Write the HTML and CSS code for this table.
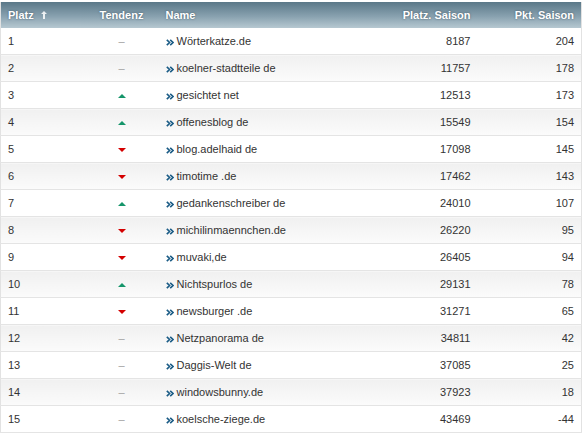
FILE: index.html
```html
<!DOCTYPE html>
<html lang="de">
<head>
<meta charset="utf-8">
<link rel="stylesheet" href="styles.css">
</head>
<body>
<svg class="defs" width="0" height="0" aria-hidden="true">
  <symbol id="chev" viewBox="0 0 8 7">
    <path d="M0.8 0.8 L3.6 3.5 L0.8 6.2 M4.2 0.8 L7 3.5 L4.2 6.2" fill="none" stroke="#1b5c86" stroke-width="1.6"/>
  </symbol>
</svg>
<table class="ranking">
  <colgroup>
    <col class="c-platz"><col class="c-tend"><col class="c-name"><col class="c-ps"><col class="c-pkt">
  </colgroup>
  <thead>
    <tr>
      <th class="left">Platz <span class="sort"><svg width="6" height="8" viewBox="0 0 6 8"><path d="M3 0 L6 3 L4 3 L4 8 L2 8 L2 3 L0 3 Z" fill="#fff" opacity="0.85"/></svg></span></th>
      <th class="center">Tendenz</th>
      <th class="left name">Name</th>
      <th class="right">Platz. Saison</th>
      <th class="right">Pkt. Saison</th>
    </tr>
  </thead>
  <tbody>
    <tr><td>1</td><td class="center"><span class="dash">–</span></td><td class="name"><svg class="go"><use href="#chev"/></svg>Wörterkatze.de</td><td class="right">8187</td><td class="right">204</td></tr>
    <tr><td>2</td><td class="center"><span class="dash">–</span></td><td class="name"><svg class="go"><use href="#chev"/></svg>koelner-stadtteile de</td><td class="right">11757</td><td class="right">178</td></tr>
    <tr><td>3</td><td class="center"><span class="up"></span></td><td class="name"><svg class="go"><use href="#chev"/></svg>gesichtet net</td><td class="right">12513</td><td class="right">173</td></tr>
    <tr><td>4</td><td class="center"><span class="up"></span></td><td class="name"><svg class="go"><use href="#chev"/></svg>offenesblog de</td><td class="right">15549</td><td class="right">154</td></tr>
    <tr><td>5</td><td class="center"><span class="down"></span></td><td class="name"><svg class="go"><use href="#chev"/></svg>blog.adelhaid de</td><td class="right">17098</td><td class="right">145</td></tr>
    <tr><td>6</td><td class="center"><span class="down"></span></td><td class="name"><svg class="go"><use href="#chev"/></svg>timotime .de</td><td class="right">17462</td><td class="right">143</td></tr>
    <tr><td>7</td><td class="center"><span class="up"></span></td><td class="name"><svg class="go"><use href="#chev"/></svg>gedankenschreiber de</td><td class="right">24010</td><td class="right">107</td></tr>
    <tr><td>8</td><td class="center"><span class="down"></span></td><td class="name"><svg class="go"><use href="#chev"/></svg>michilinmaennchen.de</td><td class="right">26220</td><td class="right">95</td></tr>
    <tr><td>9</td><td class="center"><span class="down"></span></td><td class="name"><svg class="go"><use href="#chev"/></svg>muvaki,de</td><td class="right">26405</td><td class="right">94</td></tr>
    <tr><td>10</td><td class="center"><span class="up"></span></td><td class="name"><svg class="go"><use href="#chev"/></svg>Nichtspurlos de</td><td class="right">29131</td><td class="right">78</td></tr>
    <tr><td>11</td><td class="center"><span class="down"></span></td><td class="name"><svg class="go"><use href="#chev"/></svg>newsburger .de</td><td class="right">31271</td><td class="right">65</td></tr>
    <tr><td>12</td><td class="center"><span class="dash">–</span></td><td class="name"><svg class="go"><use href="#chev"/></svg>Netzpanorama de</td><td class="right">34811</td><td class="right">42</td></tr>
    <tr><td>13</td><td class="center"><span class="dash">–</span></td><td class="name"><svg class="go"><use href="#chev"/></svg>Daggis-Welt de</td><td class="right">37085</td><td class="right">25</td></tr>
    <tr><td>14</td><td class="center"><span class="dash">–</span></td><td class="name"><svg class="go"><use href="#chev"/></svg>windowsbunny.de</td><td class="right">37923</td><td class="right">18</td></tr>
    <tr><td>15</td><td class="center"><span class="dash">–</span></td><td class="name"><svg class="go"><use href="#chev"/></svg>koelsche-ziege.de</td><td class="right">43469</td><td class="right">-44</td></tr>
  </tbody>
</table>
</body>
</html>
```

FILE: styles.css
```css
html, body {
  margin: 0;
  padding: 0;
  background: #fff;
}
body {
  padding-top: 2px;
  font-family: "Liberation Sans", Arial, sans-serif;
}
.defs {
  position: absolute;
  width: 0;
  height: 0;
}
.ranking {
  width: 582px;
  border-collapse: collapse;
  table-layout: fixed;
  font-size: 11px;
  color: #333;
  border-left: 1px solid #e2e2e2;
  border-right: 1px solid #e2e2e2;
}
.c-platz { width: 80px; }
.c-tend { width: 82px; }
.c-name { width: 200px; }
.c-ps { width: 115px; }
.c-pkt { width: 104px; }
.ranking th {
  height: 26px;
  padding: 0 7px;
  font-size: 11px;
  font-weight: bold;
  color: #fff;
  text-shadow: 0 0 2px rgba(40, 60, 75, 0.7);
  background: linear-gradient(to bottom, #5a7888 0%, #88a1af 55%, #b6c8d1 100%);
  vertical-align: middle;
}
.ranking td {
  height: 26px;
  padding: 0 7px;
  border-bottom: 1px solid #e4e4e4;
  vertical-align: middle;
}
.ranking .name {
  padding-left: 3px;
}
.ranking tbody tr:nth-child(even) td {
  background: linear-gradient(to bottom, #f0f0f0 0%, #fbfbfb 100%);
}
.left { text-align: left; }
.center { text-align: center; }
.right { text-align: right; }
.sort {
  display: inline-block;
  margin-left: 4px;
}
.go {
  display: inline-block;
  width: 8px;
  height: 7px;
  margin-right: 3px;
  vertical-align: -1px;
}
.dash {
  color: #a0a0a0;
}
.up, .down {
  display: inline-block;
  width: 0;
  height: 0;
  border-left: 4px solid transparent;
  border-right: 4px solid transparent;
  vertical-align: middle;
}
.up {
  border-bottom: 4px solid #15956a;
}
.down {
  border-top: 4px solid #d40000;
}
```
